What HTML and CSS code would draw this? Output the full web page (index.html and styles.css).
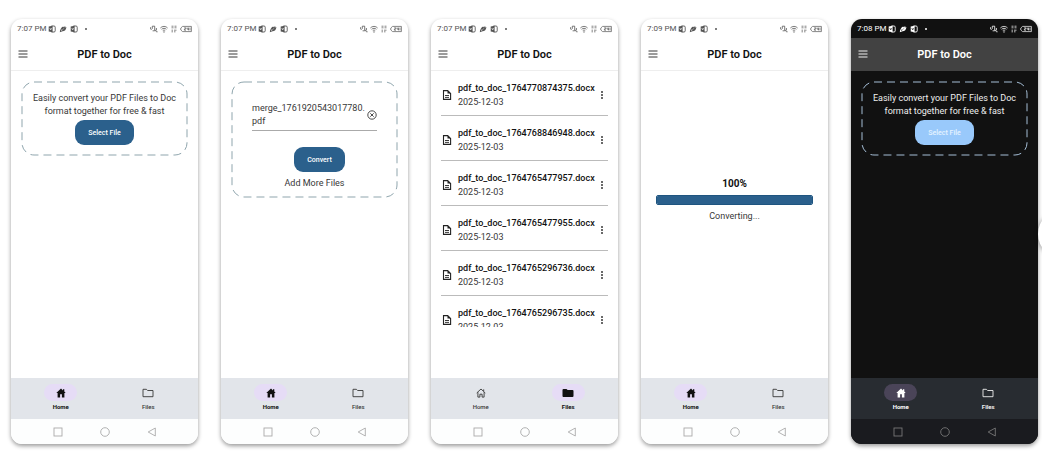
FILE: index.html
```html
<!DOCTYPE html>
<html lang="en">

<head>
  <meta charset="UTF-8">
  <meta name="viewport" content="width=device-width, initial-scale=1.0">
  <title>PDF to Doc</title>
  <link rel="stylesheet" href="styles.css">
</head>

<body>
  <!-- Icons -->
  <svg class="sprite" aria-hidden="true">
    <symbol id="i-app" viewBox="0 0 8 8">
      <path d="M3.4 1H6a1.2 1.2 0 0 1 1.200 1.200v3.600A1.200 1.200 0 0 1 6 7H3.400" fill="none" stroke="currentColor" stroke-width="0.900" />
      <path d="M0.700 1.500L4.600 0.800v6.400L0.700 6.500z" fill="currentColor" />
      <path d="M1.800 3l0.900 2 0.900-2M5.300 3h1M5.300 4.800h1" fill="none" stroke="var(--surface)" stroke-width="0.600" />
    </symbol>
    <symbol id="i-leaf" viewBox="0 0 8 8">
      <path d="M0.800 7.200C1 4.500 2.200 2.200 4.200 1.400l0.500 0.900L6.300 0.900l-0.100 1.600 1.200-0.500C7.300 4.800 5.600 6.200 3.600 6.300z" fill="currentColor" />
      <path d="M2 6L5.400 3M2.300 4.200l0.400 1.600" fill="none" stroke="var(--surface)" stroke-width="0.400" />
    </symbol>
    <symbol id="i-ring" viewBox="0 0 8 8">
      <path d="M1 4.800L2.300 3.500V1.200h2.400v4.600H2.600M0.600 2.200v2M5.200 4.800l1.200 2h1.200M6.400 3v2.400" fill="none" stroke="currentColor" stroke-width="0.800" />
    </symbol>
    <symbol id="i-wifi" viewBox="0 0 8 8">
      <path d="M0.400 3C2.500 0.900 5.500 0.900 7.600 3M1.600 4.300c1.400-1.300 3.400-1.300 4.800 0M2.800 5.600c0.700-0.600 1.700-0.600 2.400 0" fill="none" stroke="currentColor" stroke-width="0.800" />
      <circle cx="4" cy="6.900" r="0.700" fill="currentColor" />
    </symbol>
    <symbol id="i-speed" viewBox="0 0 8 8">
      <path d="M1.500 1.200h2M4.500 1.200h2M1.500 2.800h2M4.500 2.800h2M1.500 5.200h1.500M4 5.200h2.500M1.500 6.800h1.500M4 6.800h1.500" stroke="currentColor" stroke-width="0.700" />
    </symbol>
    <symbol id="i-battery" viewBox="0 0 12 8">
      <path d="M2.600 1.400h8.800v5.200H2.600L0.800 5V3z" fill="none" stroke="currentColor" stroke-width="0.700" />
      <path d="M4.200 2.800h1.600v1.200H4.400v1.200h1.600M7.200 2.600v1.600h1.500M8.500 2.600v2.800M10 2.600v2.800" fill="none" stroke="currentColor" stroke-width="0.700" />
    </symbol>
    <symbol id="i-menu" viewBox="0 0 10 8">
      <path d="M0.500 1h9M0.500 4h9M0.500 7h9" stroke="currentColor" />
    </symbol>
    <symbol id="i-doc" viewBox="0 0 10 10">
      <path d="M1.500 0.600h4.200l2.900 2.900v5.900H1.500z" fill="none" stroke="currentColor" stroke-width="1.100" />
      <path d="M5.500 0.600v3h3z" fill="currentColor" />
      <path d="M3 5.500h4M3 7.400h4" stroke="currentColor" stroke-width="0.900" />
    </symbol>
    <symbol id="i-more" viewBox="0 0 4 10">
      <circle cx="2" cy="2" r="1" fill="currentColor" />
      <circle cx="2" cy="5" r="1" fill="currentColor" />
      <circle cx="2" cy="8" r="1" fill="currentColor" />
    </symbol>
    <symbol id="i-remove" viewBox="0 0 10 10">
      <circle cx="5" cy="5" r="4.200" fill="none" stroke="currentColor" stroke-width="0.900" />
      <path d="M3.300 3.300l3.400 3.400M6.700 3.300L3.300 6.700" stroke="currentColor" stroke-width="0.900" />
    </symbol>
    <symbol id="i-home" viewBox="0 0 10 10">
      <path d="M5 0.600L0.300 4.900h1.300V9.500h2.500V6.300h1.800v3.200h2.500V4.900h1.300L8.300 3.600V1.200H7v1.200z" fill="currentColor" />
    </symbol>
    <symbol id="i-home-line" viewBox="0 0 10 10">
      <path d="M0.700 5L5 1l4.300 4M1.900 4.200v4.900h2V6.200h2.200v2.900h2V4.200M7.700 3V1.400" fill="none" stroke="currentColor" stroke-width="0.900" />
    </symbol>
    <symbol id="i-folder" viewBox="0 0 12 10">
      <path d="M0.500 1.900a1 1 0 0 1 1-1h3l1.100 1.200h4.900a1 1 0 0 1 1 1v5a1 1 0 0 1-1 1h-9a1 1 0 0 1-1-1z" fill="currentColor" />
    </symbol>
    <symbol id="i-folder-line" viewBox="0 0 12 10">
      <path d="M1 1.300h3.400l1.200 1.200H11v6.200H1z" fill="none" stroke="currentColor" stroke-width="0.900" stroke-linejoin="round" />
    </symbol>
    <symbol id="i-square" viewBox="0 0 10 10">
      <rect x="1" y="1" width="8" height="8" fill="none" stroke="currentColor" stroke-width="0.900" />
    </symbol>
    <symbol id="i-circle" viewBox="0 0 10 10">
      <circle cx="5" cy="5" r="4.300" fill="none" stroke="currentColor" stroke-width="0.900" />
    </symbol>
    <symbol id="i-back" viewBox="0 0 10 10">
      <path d="M8.300 1v8L1.200 5z" fill="none" stroke="currentColor" stroke-width="0.900" stroke-linejoin="round" />
    </symbol>
  </svg>

  <main class="gallery">
    <!-- Home -->
    <section class="phone">
      <div class="status">
        <span class="time">7:07 PM</span>
        <svg class="s-icon"><use href="#i-app" /></svg>
        <svg class="s-icon"><use href="#i-leaf" /></svg>
        <svg class="s-icon"><use href="#i-app" /></svg>
        <span class="dot"></span>
        <span class="signals">
          <svg><use href="#i-ring" /></svg>
          <svg><use href="#i-wifi" /></svg>
          <svg><use href="#i-speed" /></svg>
          <svg class="battery"><use href="#i-battery" /></svg>
        </span>
      </div>
      <header class="app-bar">
        <button class="menu-btn" aria-label="Menu"><svg><use href="#i-menu" /></svg></button>
        <h2>PDF to Doc</h2>
      </header>
      <div class="content">
        <div class="drop-box">
          <svg class="dashes"><rect rx="12" /></svg>
          <p class="intro">Easily convert your PDF Files to Doc<br>format together for free &amp; fast</p>
          <button class="btn">Select File</button>
        </div>
      </div>
      <nav class="tabs">
        <a class="tab active" href="#home"><span class="pill"><svg><use href="#i-home" /></svg></span>Home</a>
        <a class="tab" href="#files"><span class="pill"><svg><use href="#i-folder-line" /></svg></span>Files</a>
      </nav>
      <div class="system">
        <button aria-label="Recent"><svg><use href="#i-square" /></svg></button>
        <button aria-label="Home screen"><svg><use href="#i-circle" /></svg></button>
        <button aria-label="Back"><svg><use href="#i-back" /></svg></button>
      </div>
    </section>

    <!-- File selected -->
    <section class="phone">
      <div class="status">
        <span class="time">7:07 PM</span>
        <svg class="s-icon"><use href="#i-app" /></svg>
        <svg class="s-icon"><use href="#i-leaf" /></svg>
        <svg class="s-icon"><use href="#i-app" /></svg>
        <span class="dot"></span>
        <span class="signals">
          <svg><use href="#i-ring" /></svg>
          <svg><use href="#i-wifi" /></svg>
          <svg><use href="#i-speed" /></svg>
          <svg class="battery"><use href="#i-battery" /></svg>
        </span>
      </div>
      <header class="app-bar">
        <button class="menu-btn" aria-label="Menu"><svg><use href="#i-menu" /></svg></button>
        <h2>PDF to Doc</h2>
      </header>
      <div class="content">
        <div class="drop-box selected">
          <svg class="dashes"><rect rx="12" /></svg>
          <div class="picked">
            <span>merge_1761920543017780.<wbr>pdf</span>
            <button class="remove-btn" aria-label="Remove file"><svg><use href="#i-remove" /></svg></button>
          </div>
          <button class="btn convert">Convert</button>
          <button class="add-more">Add More Files</button>
        </div>
      </div>
      <nav class="tabs">
        <a class="tab active" href="#home"><span class="pill"><svg><use href="#i-home" /></svg></span>Home</a>
        <a class="tab" href="#files"><span class="pill"><svg><use href="#i-folder-line" /></svg></span>Files</a>
      </nav>
      <div class="system">
        <button aria-label="Recent"><svg><use href="#i-square" /></svg></button>
        <button aria-label="Home screen"><svg><use href="#i-circle" /></svg></button>
        <button aria-label="Back"><svg><use href="#i-back" /></svg></button>
      </div>
    </section>

    <!-- Files list -->
    <section class="phone">
      <div class="status">
        <span class="time">7:07 PM</span>
        <svg class="s-icon"><use href="#i-app" /></svg>
        <svg class="s-icon"><use href="#i-leaf" /></svg>
        <svg class="s-icon"><use href="#i-app" /></svg>
        <span class="dot"></span>
        <span class="signals">
          <svg><use href="#i-ring" /></svg>
          <svg><use href="#i-wifi" /></svg>
          <svg><use href="#i-speed" /></svg>
          <svg class="battery"><use href="#i-battery" /></svg>
        </span>
      </div>
      <header class="app-bar">
        <button class="menu-btn" aria-label="Menu"><svg><use href="#i-menu" /></svg></button>
        <h2>PDF to Doc</h2>
      </header>
      <div class="content">
        <ul class="files">
          <li>
            <svg class="doc"><use href="#i-doc" /></svg>
            <div class="info"><b>pdf_to_doc_1764770874375.docx</b><time>2025-12-03</time></div>
            <button class="more-btn" aria-label="More"><svg><use href="#i-more" /></svg></button>
          </li>
          <li>
            <svg class="doc"><use href="#i-doc" /></svg>
            <div class="info"><b>pdf_to_doc_1764768846948.docx</b><time>2025-12-03</time></div>
            <button class="more-btn" aria-label="More"><svg><use href="#i-more" /></svg></button>
          </li>
          <li>
            <svg class="doc"><use href="#i-doc" /></svg>
            <div class="info"><b>pdf_to_doc_1764765477957.docx</b><time>2025-12-03</time></div>
            <button class="more-btn" aria-label="More"><svg><use href="#i-more" /></svg></button>
          </li>
          <li>
            <svg class="doc"><use href="#i-doc" /></svg>
            <div class="info"><b>pdf_to_doc_1764765477955.docx</b><time>2025-12-03</time></div>
            <button class="more-btn" aria-label="More"><svg><use href="#i-more" /></svg></button>
          </li>
          <li>
            <svg class="doc"><use href="#i-doc" /></svg>
            <div class="info"><b>pdf_to_doc_1764765296736.docx</b><time>2025-12-03</time></div>
            <button class="more-btn" aria-label="More"><svg><use href="#i-more" /></svg></button>
          </li>
          <li>
            <svg class="doc"><use href="#i-doc" /></svg>
            <div class="info"><b>pdf_to_doc_1764765296735.docx</b><time>2025-12-03</time></div>
            <button class="more-btn" aria-label="More"><svg><use href="#i-more" /></svg></button>
          </li>
        </ul>
      </div>
      <nav class="tabs">
        <a class="tab" href="#home"><span class="pill"><svg><use href="#i-home-line" /></svg></span>Home</a>
        <a class="tab active" href="#files"><span class="pill"><svg><use href="#i-folder" /></svg></span>Files</a>
      </nav>
      <div class="system">
        <button aria-label="Recent"><svg><use href="#i-square" /></svg></button>
        <button aria-label="Home screen"><svg><use href="#i-circle" /></svg></button>
        <button aria-label="Back"><svg><use href="#i-back" /></svg></button>
      </div>
    </section>

    <!-- Converting -->
    <section class="phone">
      <div class="status">
        <span class="time">7:09 PM</span>
        <svg class="s-icon"><use href="#i-app" /></svg>
        <svg class="s-icon"><use href="#i-leaf" /></svg>
        <svg class="s-icon"><use href="#i-app" /></svg>
        <span class="dot"></span>
        <span class="signals">
          <svg><use href="#i-ring" /></svg>
          <svg><use href="#i-wifi" /></svg>
          <svg><use href="#i-speed" /></svg>
          <svg class="battery"><use href="#i-battery" /></svg>
        </span>
      </div>
      <header class="app-bar">
        <button class="menu-btn" aria-label="Menu"><svg><use href="#i-menu" /></svg></button>
        <h2>PDF to Doc</h2>
      </header>
      <div class="content">
        <div class="converting">
          <label for="progress">100%</label>
          <progress id="progress" value="100" max="100"></progress>
          <p>Converting...</p>
        </div>
      </div>
      <nav class="tabs">
        <a class="tab active" href="#home"><span class="pill"><svg><use href="#i-home" /></svg></span>Home</a>
        <a class="tab" href="#files"><span class="pill"><svg><use href="#i-folder-line" /></svg></span>Files</a>
      </nav>
      <div class="system">
        <button aria-label="Recent"><svg><use href="#i-square" /></svg></button>
        <button aria-label="Home screen"><svg><use href="#i-circle" /></svg></button>
        <button aria-label="Back"><svg><use href="#i-back" /></svg></button>
      </div>
    </section>

    <!-- Dark theme -->
    <section class="phone dark">
      <div class="status">
        <span class="time">7:08 PM</span>
        <svg class="s-icon"><use href="#i-app" /></svg>
        <svg class="s-icon"><use href="#i-leaf" /></svg>
        <svg class="s-icon"><use href="#i-app" /></svg>
        <span class="dot"></span>
        <span class="signals">
          <svg><use href="#i-ring" /></svg>
          <svg><use href="#i-wifi" /></svg>
          <svg><use href="#i-speed" /></svg>
          <svg class="battery"><use href="#i-battery" /></svg>
        </span>
      </div>
      <header class="app-bar">
        <button class="menu-btn" aria-label="Menu"><svg><use href="#i-menu" /></svg></button>
        <h2>PDF to Doc</h2>
      </header>
      <div class="content">
        <div class="drop-box">
          <svg class="dashes"><rect rx="12" /></svg>
          <p class="intro">Easily convert your PDF Files to Doc<br>format together for free &amp; fast</p>
          <button class="btn">Select File</button>
        </div>
      </div>
      <nav class="tabs">
        <a class="tab active" href="#home"><span class="pill"><svg><use href="#i-home" /></svg></span>Home</a>
        <a class="tab" href="#files"><span class="pill"><svg><use href="#i-folder-line" /></svg></span>Files</a>
      </nav>
      <div class="system">
        <button aria-label="Recent"><svg><use href="#i-square" /></svg></button>
        <button aria-label="Home screen"><svg><use href="#i-circle" /></svg></button>
        <button aria-label="Back"><svg><use href="#i-back" /></svg></button>
      </div>
    </section>
  </main>

  <button class="next-btn" aria-label="Next"></button>
</body>

</html>
```

FILE: styles.css
```css
* {
  box-sizing: border-box;
}

body {
  margin: 0;
  min-height: 100vh;
  display: flex;
  position: relative;
  overflow-x: hidden;
  background: #fff;
  font-family: Roboto, "Liberation Sans", sans-serif;
}

h2,
p,
ul {
  margin: 0;
  padding: 0;
}

button {
  padding: 0;
  border: none;
  background: none;
  color: inherit;
  font-family: inherit;
  cursor: pointer;
}

svg {
  display: block;
}

.sprite {
  position: absolute;
  width: 0;
  height: 0;
}

.gallery {
  flex: 1;
  display: grid;
  grid-template-columns: repeat(5, 1fr);
  gap: 23px;
  padding: 19px 4px 9px 11px;
}

/* phone frame */
.phone {
  --surface: #fff;
  --text: #383838;
  --strong: #111;
  --line: #8fa5ad;
  --btn: #2b608c;
  --btn-text: #fff;
  --nav: #e2e5ea;
  --pill: #e6dcf6;
  --system: #fdfefe;
  --system-icon: #aaa;
  min-width: 0;
  display: flex;
  flex-direction: column;
  overflow: hidden;
  border-radius: 11px;
  background: var(--surface);
  color: var(--text);
  box-shadow: 0 2px 4px rgba(0, 0, 0, 0.4);
}

.phone.dark {
  --surface: #111;
  --text: #eee;
  --strong: #fff;
  --line: #a5bed6;
  --btn: #99c9fb;
  --btn-text: #e6f3ff;
  --nav: #282c31;
  --pill: #4a4458;
  --system: #1a1b1f;
  --system-icon: #777;
}

.status {
  height: 19px;
  display: flex;
  align-items: center;
  padding: 0 6px;
  font-size: 8px;
  color: #555;
}

.dark .status {
  color: #fff;
}

.time {
  margin-right: 2px;
}

.s-icon {
  width: 8px;
  height: 8px;
  margin-right: 3px;
}

.dot {
  width: 2px;
  height: 2px;
  margin-left: 4px;
  border-radius: 50%;
  background: currentColor;
}

.signals {
  display: flex;
  gap: 2px;
  margin-left: auto;
}

.signals svg {
  width: 8px;
  height: 8px;
}

.signals .battery {
  width: 12px;
}

.app-bar {
  height: 33px;
  display: grid;
  grid-template-columns: 20px 1fr 20px;
  align-items: center;
  padding: 0 7px;
  border-bottom: 1px solid #eee;
}

.app-bar h2 {
  text-align: center;
  font-size: 11px;
  font-weight: 600;
  line-height: 15px;
  color: var(--strong);
}

.menu-btn svg {
  width: 10px;
  height: 8px;
}

.dark .app-bar {
  background: #424242;
  border-bottom-color: #424242;
}

.content {
  flex: 1;
  padding: 10px;
}

/* dashed upload box */
.drop-box {
  position: relative;
  display: flex;
  flex-direction: column;
  align-items: center;
  padding: 11px 10px;
  font-size: 9px;
  line-height: 13px;
}

.dashes {
  position: absolute;
  inset: 0;
  width: 100%;
  height: 100%;
  pointer-events: none;
}

.dashes rect {
  x: 1px;
  y: 1px;
  width: calc(100% - 2px);
  height: calc(100% - 2px);
  fill: none;
  stroke: var(--line);
  stroke-dasharray: 8 5;
}

.intro {
  text-align: center;
  white-space: nowrap;
}

.btn {
  height: 25px;
  margin-top: 2px;
  padding: 0 13px;
  border-radius: 9px;
  background: var(--btn);
  color: var(--btn-text);
  font-size: 7px;
  font-weight: 500;
}

.drop-box.selected {
  padding: 21px 21px 8px;
}

.picked {
  width: 100%;
  display: flex;
  align-items: center;
  justify-content: space-between;
  padding-bottom: 2px;
  border-bottom: 1px solid #aaa;
}

.remove-btn svg {
  width: 10px;
  height: 10px;
}

.btn.convert {
  margin-top: 16px;
  margin-left: 10px;
}

.add-more {
  margin-top: 5px;
  font-size: 9px;
  line-height: 13px;
}

/* converted files */
.files {
  max-height: 246px;
  overflow: hidden;
  list-style: none;
}

.files li {
  height: 45px;
  display: flex;
  align-items: center;
  padding: 4px 4px 0 0;
  border-bottom: 1px solid #bbb;
}

.files li:first-child {
  height: 35px;
  padding: 0 4px 6px 0;
}

.doc {
  width: 10px;
  height: 10px;
  margin: 0 6px 0 1px;
  color: #222;
}

.info {
  flex: 1;
  min-width: 0;
  font-size: 9px;
  line-height: 14px;
}

.info b,
.info time {
  display: block;
  white-space: nowrap;
}

.info b {
  font-weight: 500;
  color: var(--strong);
}

.more-btn svg {
  width: 4px;
  height: 10px;
}

/* progress */
.converting {
  display: flex;
  flex-direction: column;
  align-items: center;
  gap: 4px;
  padding: 96px 5px 0;
  font-size: 9px;
  line-height: 14px;
}

.converting label {
  font-size: 10px;
  font-weight: 700;
  color: var(--strong);
}

progress {
  appearance: none;
  width: 100%;
  height: 10px;
  border: 1px solid #1f5580;
  border-radius: 2px;
  overflow: hidden;
  background: #fff;
}

progress::-webkit-progress-bar {
  background: #fff;
}

progress::-webkit-progress-value {
  background: var(--btn);
}

progress::-moz-progress-bar {
  background: var(--btn);
}

/* bottom navigation */
.tabs {
  height: 41px;
  display: flex;
  padding: 6px 6px 0;
  background: var(--nav);
}

.tab {
  flex: 1;
  display: flex;
  flex-direction: column;
  align-items: center;
  gap: 2px;
  color: var(--text);
  font-size: 6px;
  font-weight: 500;
  line-height: 8px;
  text-decoration: none;
}

.tab.active {
  color: var(--strong);
  font-weight: 700;
}

.dark .tab {
  font-weight: 700;
}

.pill {
  width: 33px;
  height: 17px;
  display: grid;
  place-items: center;
  border-radius: 9px;
}

.active .pill {
  background: var(--pill);
}

.pill svg {
  width: 12px;
  height: 10px;
}

.system {
  height: 25px;
  display: flex;
  align-items: center;
  justify-content: center;
  gap: 37px;
  background: var(--system);
  color: var(--system-icon);
}

.system svg {
  width: 10px;
  height: 10px;
}

/* carousel arrow peeking in from the right edge */
.next-btn {
  position: absolute;
  top: 210px;
  left: calc(100% - 4px);
  width: 48px;
  height: 48px;
  border-radius: 50%;
  background: #fff;
  box-shadow: 0 1px 4px rgba(0, 0, 0, 0.4);
}
```
